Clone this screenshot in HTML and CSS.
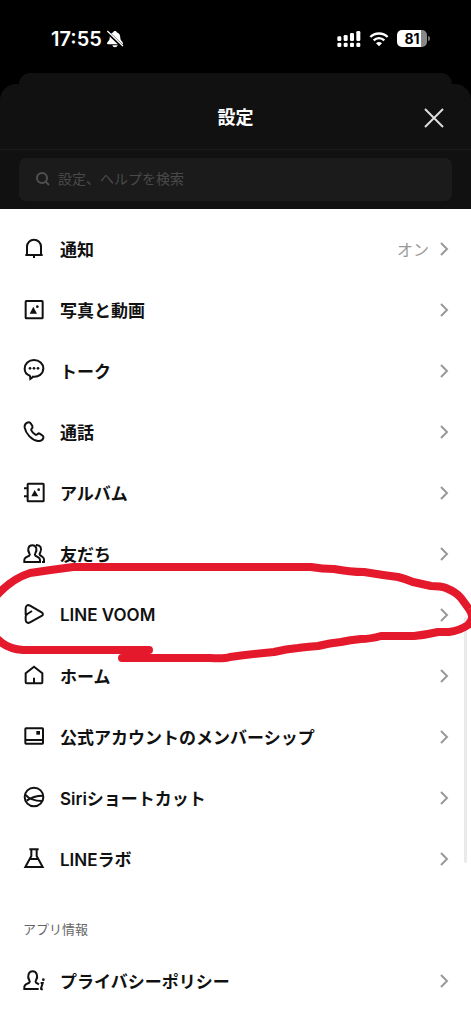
FILE: index.html
```html
<!DOCTYPE html>
<html lang="ja">
<head>
<meta charset="utf-8">
<meta name="viewport" content="width=device-width, initial-scale=1">
<title>設定</title>
<link rel="stylesheet" href="styles.css">
</head>
<body>
<svg class="defs" aria-hidden="true">
  <symbol id="chevron" viewBox="0 0 10 14"><path d="M2 1l6 6-6 6"/></symbol>
</svg>
<div class="status">
  <div class="status-time"><span>17:55</span>
    <svg width="18" height="18" viewBox="0 0 54 54"><path class="solid" d="M27 3c-3 0-5 2-5 4C13 10 11 17 11 25c0 7-7 10-8 15 0 2 1 3 3 3h42c2 0 3-1 3-3-1-5-8-8-8-15 0-8-2-15-11-18 0-2-2-4-5-4zM19 46h16c-1 4-4 6-8 6s-7-2-8-6z"/><path class="cut" d="M3 5l47 45"/><path class="slash" d="M4 3l47 45"/></svg>
  </div>
  <div class="status-right">
    <svg width="24" height="18" viewBox="0 0 72 54"><g class="solid"><rect x="1" y="19" width="12" height="14" rx="4"/><rect x="20" y="15" width="12" height="18" rx="4"/><rect x="39" y="9" width="12" height="24" rx="4"/><rect x="58" y="3" width="12" height="30" rx="4"/><rect x="1" y="38" width="12" height="13" rx="4"/><rect x="20" y="38" width="12" height="13" rx="4"/><rect x="39" y="38" width="12" height="13" rx="4"/><rect x="58" y="38" width="12" height="13" rx="4"/></g></svg>
    <svg width="20" height="16" viewBox="0 0 60 48"><path class="wave" d="M4 18C18 4 42 4 56 18M14 28c9-9 23-9 32 0"/><path class="solid" d="M30 46l-9-9c5-5 13-5 18 0z"/></svg>
    <div class="battery"><span class="battery-body">81</span><span class="battery-tip"></span></div>
  </div>
</div>
<div class="back-card"></div>
<main class="sheet">
  <header class="header">
    <h1>設定</h1>
    <button class="close" type="button" aria-label="閉じる"><svg width="20" height="20" viewBox="0 0 20 20"><path d="M1 1l18 18M19 1L1 19"/></svg></button>
  </header>
  <div class="search-area">
    <label class="search">
      <svg width="14" height="14" viewBox="0 0 14 14"><circle cx="6" cy="6" r="5"/><path d="M10 10l3 3"/></svg>
      <input type="search" aria-label="検索" placeholder="設定、ヘルプを検索">
    </label>
  </div>
  <div class="content">
    <ul class="list">
      <li><a class="row" href="#"><svg class="icon" viewBox="0 0 66 66"><path d="M12 50V26a21 21 0 0 1 42 0V50M7 51H59M33 53v7"/></svg><span class="label">通知</span><span class="value">オン</span><svg class="chevron"><use href="#chevron"/></svg></a></li>
      <li><a class="row" href="#"><svg class="icon" viewBox="0 0 66 66"><rect x="8" y="6" width="51" height="52" rx="2"/><path class="fill" d="M20 44l11-21 11 21z"/><circle class="fill" cx="43" cy="23" r="4"/></svg><span class="label">写真と動画</span><svg class="chevron"><use href="#chevron"/></svg></a></li>
      <li><a class="row" href="#"><svg class="icon" viewBox="0 0 66 66"><path d="M22 57C22 53 22 50 20 47 10 43 5 35 5 26 5 11 17 0 33 0s28 11 28 25c0 17-15 27-31 25-2 3-5 5-8 7z"/><circle class="fill" cx="21" cy="25" r="4"/><circle class="fill" cx="33" cy="25" r="4"/><circle class="fill" cx="45" cy="25" r="4"/></svg><span class="label">トーク</span><svg class="chevron"><use href="#chevron"/></svg></a></li>
      <li><a class="row" href="#"><svg class="icon" viewBox="0 0 66 66"><path d="M17 4C8 6 4 12 5 20 8 38 27 58 45 60c8 1 14-3 16-9 1-3 0-5-2-7l-9-6c-3-2-5-1-7 2-2 2-4 2-7 0-5-3-9-8-11-12-1-2-1-4 2-6 2-2 2-4 1-7L23 7C21 4 20 3 17 4z"/></svg><span class="label">通話</span><svg class="chevron"><use href="#chevron"/></svg></a></li>
      <li><a class="row" href="#"><svg class="icon" viewBox="0 0 66 66"><rect x="14" y="5" width="48" height="53" rx="2"/><path d="M3 19h11M3 43h11"/><path class="fill" d="M25 43l10-19 11 19z"/><circle class="fill" cx="47" cy="23" r="4"/></svg><span class="label">アルバム</span><svg class="chevron"><use href="#chevron"/></svg></a></li>
      <li><a class="row" href="#"><svg class="icon" viewBox="0 0 66 66"><path d="M4 57V51c0-4 2-6 5-8l10-5c2-2 2-4 0-7C12 20 16 7 28 7s16 13 9 24c-2 3-2 5 0 7l9 5c3 2 5 4 5 8v6zM39 6C52 5 58 16 52 28c-3 4-3 7 0 9l7 5c3 2 4 5 4 8v7H57"/></svg><span class="label">友だち</span><svg class="chevron"><use href="#chevron"/></svg></a></li>
      <li><a class="row" href="#"><svg class="icon" viewBox="0 0 66 66"><path d="M27 21L13 30c-4 2-5 4-5 8v9c0 8 6 12 13 8L56 36c5-3 5-8 0-11L21 5C14 1 8 5 8 13V33"/></svg><span class="label">LINE VOOM</span><svg class="chevron"><use href="#chevron"/></svg></a></li>
      <li><a class="row" href="#"><svg class="icon" viewBox="0 0 66 66"><path d="M8 25L33 5l25 20v27q0 3-3 3H11q-3 0-3-3zM33 38v17"/></svg><span class="label">ホーム</span><svg class="chevron"><use href="#chevron"/></svg></a></li>
      <li><a class="row" href="#"><svg class="icon" viewBox="0 0 66 66"><rect x="7" y="7" width="53" height="46" rx="2"/><path d="M7 42h53"/><rect class="fill" x="40" y="15" width="11" height="11"/></svg><span class="label">公式アカウントのメンバーシップ</span><svg class="chevron"><use href="#chevron"/></svg></a></li>
      <li><a class="row" href="#"><svg class="icon" viewBox="0 0 66 66"><circle cx="33" cy="30" r="28"/><path d="M6 22c12 14 30 20 51 20M60 26C40 26 24 31 11 41"/></svg><span class="label">Siriショートカット</span><svg class="chevron"><use href="#chevron"/></svg></a></li>
      <li><a class="row" href="#"><svg class="icon" viewBox="0 0 66 66"><path d="M19 4h28M25 5v19L7 57h52L41 24V5M21 33h24"/></svg><span class="label">LINEラボ</span><svg class="chevron"><use href="#chevron"/></svg></a></li>
    </ul>
    <h2>アプリ情報</h2>
    <ul class="list">
      <li><a class="row" href="#"><svg class="icon" viewBox="0 0 66 66"><path d="M47 57H4V51c0-4 2-6 5-8l10-5c2-2 2-4 0-7C12 20 16 4 29 4s17 16 10 27c-2 3-2 5 0 7l9 5"/><path d="M53 39h6l-5 17q0 3 5 1"/><circle class="fill" cx="61" cy="29" r="4"/></svg><span class="label">プライバシーポリシー</span><svg class="chevron"><use href="#chevron"/></svg></a></li>
    </ul>
    <span class="scroll-thumb"></span>
    <svg class="marker" viewBox="0 0 471 110" aria-hidden="true"><path d="M-6 43L0 37Q14 23 30 18Q50 15 73 12H311Q322 14 334 14Q350 17 364 17Q382 20 398 22Q406 24 413 27L431 31Q441 31 446 33Q456 37 461 43L469 54Q476 63 468 70Q459 76 449 77H438Q425 80 414 81H381Q370 84 361 84Q350 85 341 87Q330 88 318 91Q305 92 298 93Q286 94 274 97Q252 99 230 102Q224 104 210 103H122M149 95H23Q10 94 2 88L-6 81"/></svg>
  </div>
</main>
</body>
</html>
```
FILE: styles.css
```css
* { box-sizing: border-box; }
body {
  margin: 0;
  background: #000;
  color: #111;
  font-family: Inter, "Noto Sans CJK JP", sans-serif;
}
h1, h2, ul { margin: 0; padding: 0; }
svg { flex: none; fill: none; overflow: visible; }
.defs { position: absolute; width: 0; height: 0; }

.status {
  display: flex;
  align-items: center;
  justify-content: space-between;
  height: 73px;
  padding: 4px 41px 0 51px;
  color: #fff;
}
.status-time { display: flex; align-items: center; gap: 4px; font-size: 20px; font-weight: 600; }
.status-right { display: flex; align-items: center; gap: 8px; }
.solid { fill: #fff; }
.cut { stroke: #000; stroke-width: 10; }
.slash { stroke: #fff; stroke-width: 4; }
.wave { stroke: #fff; stroke-width: 7; }
.battery { display: flex; align-items: center; gap: 1px; }
.battery-body {
  width: 30px;
  border-radius: 5px;
  background: linear-gradient(90deg, #fff 81%, #888 81%);
  color: #000;
  font-size: 14px;
  font-weight: 700;
  line-height: 17px;
  text-align: center;
}
.battery-tip { width: 2px; height: 5px; border-radius: 0 2px 2px 0; background: #777; }

.back-card { height: 11px; margin: 0 19px; border-radius: 11px 11px 0 0; background: #111; }
.sheet { border-radius: 16px 16px 0 0; background: #111; }
.header {
  display: grid;
  grid-template-columns: 1fr auto 1fr;
  align-items: center;
  height: 66px;
  padding: 2px 27px 0;
  border-bottom: 1px solid #1b1b1b;
  color: #fff;
}
.header h1 { grid-column: 2; font-size: 18px; font-weight: 600; line-height: 24px; }
.close { justify-self: end; display: flex; padding: 0; border: 0; background: none; }
.close svg { stroke: #ddd; stroke-width: 2; }
.search-area { padding: 8px 19px; }
.search {
  display: flex;
  align-items: center;
  gap: 8px;
  height: 43px;
  padding: 0 17px 2px;
  border-radius: 7px;
  background: #1b1b1b;
}
.search svg { stroke: #505050; stroke-width: 2; }
.search input {
  flex: 1;
  min-width: 0;
  padding: 0;
  border: 0;
  outline: 0;
  background: none;
  color: #ddd;
  font: inherit;
  font-size: 14px;
}
.search input::placeholder { color: #4a4a4a; }

.content { position: relative; min-height: 815px; padding: 9px 0 13px; background: #fff; }
.list { list-style: none; }
.row {
  display: flex;
  align-items: center;
  height: 61px;
  padding: 0 22px 0 23px;
  color: #111;
  text-decoration: none;
}
.icon { width: 22px; height: 22px; stroke: #111; stroke-width: 6; }
.icon .fill { fill: #111; stroke: none; }
.label { flex: 1; margin-left: 15px; font-size: 17px; font-weight: 600; }
.value { margin-right: 10px; color: #999; font-size: 16px; }
.chevron { width: 10px; height: 14px; stroke: #999; stroke-width: 2; }
h2 { padding: 30px 23px 11px; color: #666; font-size: 13px; font-weight: 400; line-height: 20px; }

.scroll-thumb {
  position: absolute;
  top: 408px;
  right: 4px;
  width: 3px;
  height: 246px;
  border-radius: 2px;
  background: #eaeaea;
}
.marker {
  position: absolute;
  top: 346px;
  left: 0;
  width: 100%;
  overflow: hidden;
  pointer-events: none;
  stroke: #e4192c;
  stroke-width: 8;
  stroke-linecap: round;
  stroke-linejoin: round;
}
```
